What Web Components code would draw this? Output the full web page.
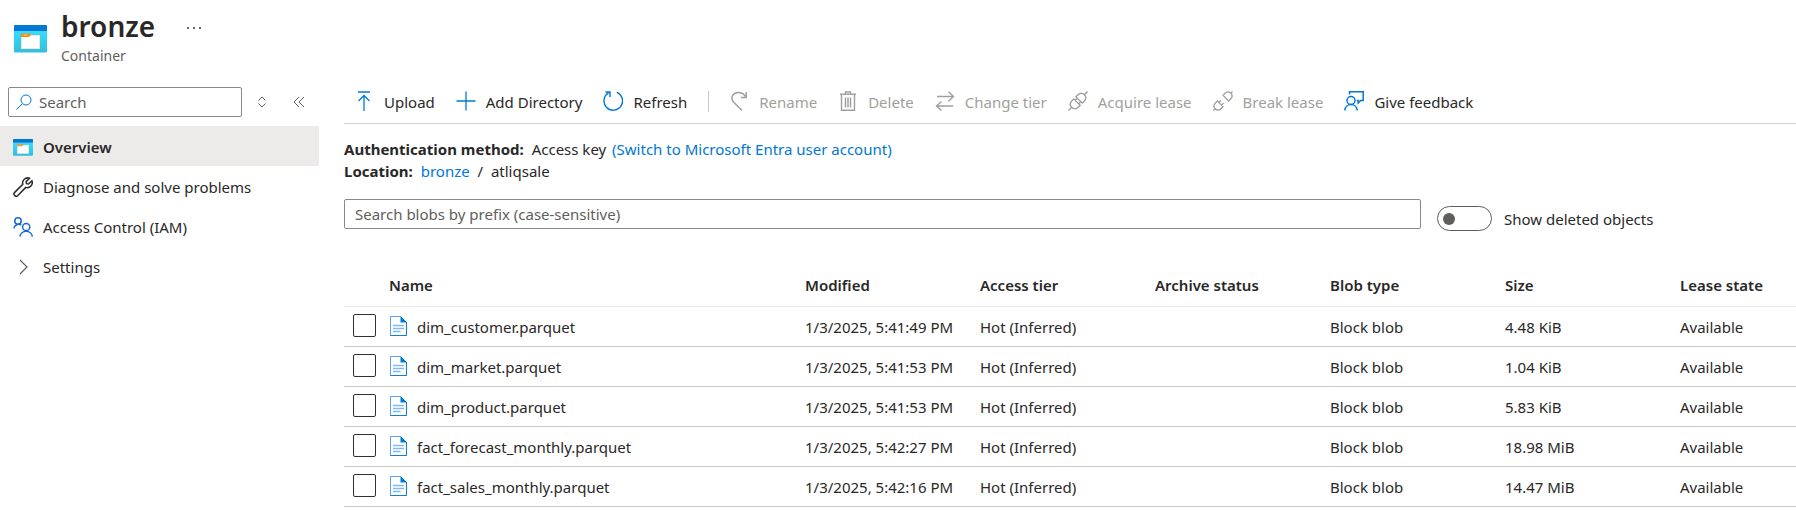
<!DOCTYPE html>
<html lang="en">
<head>
<meta charset="utf-8">
<title>bronze - Container</title>
<style>
  body { margin: 0; background: #fff; color: #292827; font: 15px/22px "Noto Sans", "Open Sans", sans-serif; }
</style>
</head>
<body>
<container-page></container-page>

<script>
const container = `
  <defs><linearGradient id="c" x1="0" y1="0" x2="0" y2="1"><stop offset="0" stop-color="#37dcfb"/><stop offset="1" stop-color="#32bedd"/></linearGradient></defs>
  <path d="M0 6h33v20.500a1 1 0 0 1-1 1H1a1 1 0 0 1-1-1z" fill="url(#c)"/>
  <path d="M1 0h31a1 1 0 0 1 1 1v5H0V1a1 1 0 0 1 1-1z" fill="#0078d4"/>
  <path d="M7 10h19v14H7z" fill="#fff"/><path d="M7.500 11v12.500h18V10.500H17" fill="none" stroke="#f3e3d3"/>
  <path d="M8 8.500h7.500a1 1 0 0 1 1 1V11l-2 1H7V9.500a1 1 0 0 1 1-1z" fill="#f78d1e"/><path d="M9.500 9.500h4v1h-4z" fill="#ffc27a"/>`;
const icons = {
  container: ['0 0 33 28', container],
  dots: ['0 0 20 20', '<g fill="currentColor" stroke="none"><circle cx="4" cy="10" r="1"/><circle cx="10" cy="10" r="1"/><circle cx="16" cy="10" r="1"/></g>'],
  search: ['0 0 16 16', '<circle cx="10" cy="6" r="5"/><path d="M6.500 9.500L.500 15.500"/>'],
  updown: ['0 0 10 12', '<path d="M1.500 4.500L5 1l3.500 3.500M1.500 7.500L5 11l3.500-3.500"/>'],
  collapse: ['0 0 12 12', '<path d="M6 1L1 6l5 5M11 1L6 6l5 5"/>'],
  wrench: ['0 0 20 20', '<path stroke-width="1.500" d="M16.500 1.300a5 5 0 0 0-6.700 6L1.500 15.600a2.200 2.200 0 0 0 3.100 3.100l8.200-8.300a5 5 0 0 0 6.100-6.600L15.500 7l-2-.300-.400-2z"/>'],
  people: ['0 0 20 20', '<g stroke-width="1.500"><circle cx="5" cy="4" r="3.200"/><circle cx="13.200" cy="10" r="3.600"/><path d="M.800 11.500a5 5 0 0 1 7.500-3.500M6.800 19.500a6.400 6.400 0 0 1 12.600 0"/></g>'],
  chevron: ['0 0 20 20', '<path stroke-width="1.200" d="M7 3l7 7-7 7"/>'],
  upload: ['0 0 20 20', '<path stroke-width="1.300" d="M4 1h12M10 20V5M4.500 10L10 4.500l5.500 5.500"/>'],
  add: ['0 0 20 20', '<path stroke-width="1.300" d="M10 .500v19M.500 10h19"/>'],
  refresh: ['0 0 20 20', '<path stroke-width="1.400" d="M13.800 1.300a9.300 9.300 0 1 1-8.300.600M2.500 1H7v5"/>'],
  rename: ['0 0 20 20', '<path stroke-width="1.500" d="M17.200 1v5.500H12M17 6.300C14 .200 6 0 3.500 4.500c-1.500 3-.500 5 1.500 7L13 19.500"/>'],
  trash: ['0 0 20 20', '<path stroke-width="1.400" d="M2 3.300h16M7.500 3V1h5v2M3.500 3.500v15.700h13V3.500M7.500 6.500v10M10 6.500v10M12.500 6.500v10"/>'],
  change: ['0 0 20 20', '<path stroke-width="1.400" d="M2 5.500h16.500M13.500 .800l5 4.700-5 4.700M18 15H1.500M6.500 10.500L1.500 15l5 4.500"/>'],
  acquire: ['0 0 20 20', '<g stroke-width="1.400" transform="rotate(45 10 10)"><path d="M10-3.500V1M10 19v4.500M5.500 8.500V6c0-3 1.500-5 4.500-5s4.500 2 4.500 5v2.500zM5.500 11.500V14c0 3 1.500 5 4.500 5s4.500-2 4.500-5v-2.500zM7.500 8.500v3M12.500 8.500v3"/></g>'],
  broken: ['0 0 20 20', '<g stroke-width="1.300" transform="rotate(45 10 10)"><path d="M10-3.500V-1M10 21v2.500M6 6V3.500C6 .500 7.500-1 10-1s4 1.500 4 4.500V6zM6 14v2.500c0 3 1.500 4.500 4 4.500s4-1.500 4-4.500V14zM8.200 14v-3M11.800 14v-3"/></g>'],
  feedback: ['0 0 20 20', '<g stroke-width="1.500"><circle cx="7" cy="9.500" r="4"/><path d="M.800 19.500c.500-8 11.900-8 12.400 0M5.500 3.500V.800h13.700v8.700h-2.500l-2.500 2.500V9.500h-1.500"/></g>'],
  file: ['0 0 17 20', '<path d="M.500.500h10l6 6v13H.500z" fill="#fff" stroke="#5ea0ef"/><path d="M16.500 6v13.500H.500" stroke="#0f7fdb"/><path d="M10.500 0l6.500 6.500h-6.500z" fill="#0078d4" stroke="none"/><path d="M3 9.500h11M3 12.500h11M3 15.500h7.500" stroke="#83b9f9" stroke-width="1.500"/>']
};

function define(name, html, setup) {
  const template = document.createElement('template');
  template.innerHTML = '<style>*{box-sizing:border-box}:host{display:block}</style>' + html;
  customElements.define(name, class extends HTMLElement {
    connectedCallback() {
      if (this.shadowRoot) return;
      this.attachShadow({ mode: 'open' }).append(template.content.cloneNode(true));
      if (setup) setup(this.shadowRoot, this);
    }
  });
}

define('ui-icon', `
  <style>:host{display:inline-flex;flex:none;width:20px;height:20px} svg{width:100%;height:100%;fill:none;stroke:currentColor}
  :host([name=container]) svg{stroke:none}</style>
  <svg aria-hidden="true"></svg>`, (root, host) => {
  const [box, body] = icons[host.getAttribute('name')];
  const svg = root.querySelector('svg');
  svg.setAttribute('viewBox', box);
  svg.innerHTML = body;
});

define('page-header', `
  <style>
    :host{display:flex;align-items:flex-start;padding:7px 14px 0;height:79px}
    .logo{width:33px;height:28px;margin:18px 14px 0 0}
    h1{margin:0;font-size:28px;line-height:38px;font-weight:600}
    p{margin:0;font-size:14px;color:#605e5c}
    button{border:0;background:none;padding:0;margin:11px 0 0 29px;color:#323130;display:flex}
  </style>
  <ui-icon class="logo" name="container"></ui-icon>
  <div><h1><slot></slot></h1><p><slot name="kind"></slot></p></div>
  <button aria-label="More"><ui-icon name="dots"></ui-icon></button>`);

define('nav-item', `
  <style>
    a{display:flex;align-items:center;gap:10px;height:40px;padding:2px 13px 0;color:inherit;text-decoration:none}
    :host([current]) a{background:#edebe9;font-weight:600}
    :host([icon=container]) ui-icon{height:17px}
    :host([icon=people]) ui-icon{color:#1668dc}
    :host([icon=chevron]) ui-icon{color:#605e5c}
  </style>
  <a href="#"><slot></slot></a>`, (root, host) => {
  const icon = document.createElement('ui-icon');
  icon.setAttribute('name', host.getAttribute('icon'));
  const link = root.querySelector('a');
  link.prepend(icon);
  if (host.hasAttribute('current')) link.setAttribute('aria-current', 'page');
});

define('side-nav', `
  <style>
    .tools{display:flex;align-items:center;height:30px;margin:8px 8px 9px}
    label{display:flex;align-items:center;flex:none;gap:7px;width:234px;height:30px;padding:0 7px;border:1px solid #8a8886;border-radius:2px}
    label ui-icon{width:16px;height:16px;color:#0078d4}
    input{flex:1;min-width:0;border:0;outline:0;padding:0;background:none;font:inherit;color:inherit}
    input::placeholder{color:#605e5c;opacity:1}
    button{border:0;background:none;padding:0;display:flex;color:#605e5c}
    .sort{margin-left:15px}.sort ui-icon{width:10px;height:12px}
    .fold{margin-left:26px}.fold ui-icon{width:12px;height:12px}
  </style>
  <div class="tools">
    <label><ui-icon name="search"></ui-icon><input type="text" placeholder="Search" aria-label="Search"></label>
    <button class="sort" aria-label="Expand all"><ui-icon name="updown"></ui-icon></button>
    <button class="fold" aria-label="Collapse menu"><ui-icon name="collapse"></ui-icon></button>
  </div>
  <nav>
    <nav-item icon="container" current>Overview</nav-item>
    <nav-item icon="wrench">Diagnose and solve problems</nav-item>
    <nav-item icon="people">Access Control (IAM)</nav-item>
    <nav-item icon="chevron">Settings</nav-item>
  </nav>`);

define('tool-button', `
  <style>
    button{display:flex;align-items:center;gap:10px;height:44px;padding:0 11px 0 10px;border:0;background:none;font:inherit;color:inherit;white-space:nowrap}
    ui-icon{color:#0078d4}
    button:disabled,button:disabled ui-icon{color:#a19f9d}
    span{padding-top:2px}
  </style>
  <button><span><slot></slot></span></button>`, (root, host) => {
  const icon = document.createElement('ui-icon');
  icon.setAttribute('name', host.getAttribute('icon'));
  const button = root.querySelector('button');
  button.prepend(icon);
  button.disabled = host.hasAttribute('disabled');
});

define('command-bar', `
  <style>:host{display:flex;align-items:center;height:45px;border-bottom:1px solid #d2d0ce} i{width:1px;height:21px;margin:0 10px;background:#c8c6c4}</style>
  <tool-button icon="upload">Upload</tool-button>
  <tool-button icon="add">Add Directory</tool-button>
  <tool-button icon="refresh">Refresh</tool-button>
  <i></i>
  <tool-button icon="rename" disabled>Rename</tool-button>
  <tool-button icon="trash" disabled>Delete</tool-button>
  <tool-button icon="change" disabled>Change tier</tool-button>
  <tool-button icon="acquire" disabled>Acquire lease</tool-button>
  <tool-button icon="broken" disabled>Break lease</tool-button>
  <tool-button icon="feedback">Give feedback</tool-button>`);

define('blob-info', `
  <style>:host{padding-top:14px} a{color:#0078d4;text-decoration:none} p{margin:0} b{margin-right:4px} p:first-of-type a{margin-left:2px}</style>
  <p><b>Authentication method:</b> Access key <a href="#">(Switch to Microsoft Entra user account)</a></p>
  <p><b>Location:</b> <a href="#">bronze</a>&nbsp; /&nbsp; atliqsale</p>`);

define('blob-filter', `
  <style>
    :host{display:flex;align-items:flex-start;padding-top:17px}
    .prefix{flex:1;min-width:0;height:30px;padding:0 10px;border:1px solid #8a8886;border-radius:2px;font:inherit;color:inherit}
    .prefix::placeholder{color:#605e5c;opacity:1}
    label{display:flex;align-items:center;flex:none;gap:12px;width:375px;padding:7px 0 0 16px}
    .toggle{appearance:none;display:flex;align-items:center;width:55px;height:25px;margin:0;padding:0 5px;border:1px solid #605e5c;border-radius:13px}
    .toggle::before{content:"";width:12px;height:12px;border-radius:50%;background:#605e5c}
    .toggle:checked{justify-content:flex-end}
  </style>
  <input class="prefix" type="text" placeholder="Search blobs by prefix (case-sensitive)" aria-label="Search blobs by prefix (case-sensitive)">
  <label><input class="toggle" type="checkbox" role="switch">Show deleted objects</label>`);

define('blob-table', `
  <style>
    :host{padding-top:32px}
    table{width:100%;table-layout:fixed;border-collapse:separate;border-spacing:0}
    .check{width:45px}.col{width:175px}.last{width:116px}
    th,thead td{height:44px;padding:0;text-align:left;font-weight:600;border-bottom:1px solid #edebe9}
    tbody td{height:40px;padding:1px 0 0;white-space:nowrap;border-bottom:1px solid #c8c6c4}
    tbody td:first-child{padding:0 0 2px 9px}
    input{appearance:none;display:block;width:23px;height:23px;margin:0;border:1px solid #323130;border-radius:2px;background:#fff}
    input:checked{background:#0078d4}
    .name{display:flex;align-items:center;gap:10px}
    ui-icon{width:17px;height:20px;margin:-2px 0 0 1px}
  </style>
  <table>
    <colgroup><col class="check"><col><col class="col"><col class="col"><col class="col"><col class="col"><col class="col"><col class="last"></colgroup>
    <thead><tr><td></td><th>Name</th><th>Modified</th><th>Access tier</th><th>Archive status</th><th>Blob type</th><th>Size</th><th>Lease state</th></tr></thead>
    <tbody></tbody>
  </table>`, root => {
  const blobs = [
    ['dim_customer.parquet', '5:41:49', '4.48 KiB'],
    ['dim_market.parquet', '5:41:53', '1.04 KiB'],
    ['dim_product.parquet', '5:41:53', '5.83 KiB'],
    ['fact_forecast_monthly.parquet', '5:42:27', '18.98 MiB'],
    ['fact_sales_monthly.parquet', '5:42:16', '14.47 MiB']
  ];
  root.querySelector('tbody').innerHTML = blobs.map(([name, time, size]) => `
    <tr><td><input type="checkbox" aria-label="Select ${name}"></td>
    <td><div class="name"><ui-icon name="file"></ui-icon><span>${name}</span></div></td>
    <td>1/3/2025, ${time} PM</td><td>Hot (Inferred)</td><td></td><td>Block blob</td><td>${size}</td><td>Available</td></tr>`).join('');
});

define('container-page', `
  <style>.body{display:flex;align-items:flex-start} side-nav{flex:none;width:319px} main{flex:1;min-width:0;margin-left:25px}</style>
  <page-header>bronze<span slot="kind">Container</span></page-header>
  <div class="body">
    <side-nav></side-nav>
    <main>
      <command-bar></command-bar>
      <blob-info></blob-info>
      <blob-filter></blob-filter>
      <blob-table></blob-table>
    </main>
  </div>`);
</script>
</body>
</html>
